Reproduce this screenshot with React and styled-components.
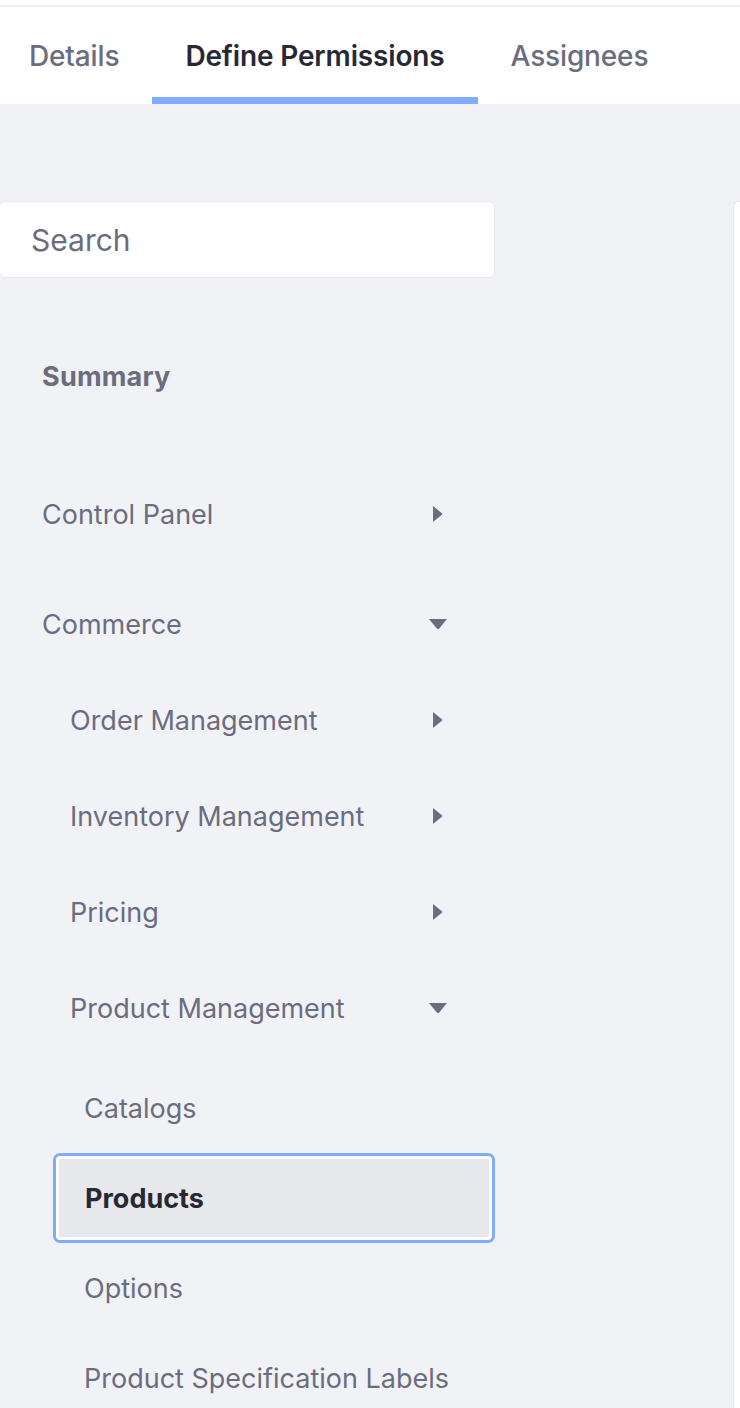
import styled, { createGlobalStyle } from 'styled-components';

const GlobalStyle = createGlobalStyle`
  html, body {
    margin: 0;
    padding: 0;
    background-color: #f1f2f5;
    font-family: Inter, "Noto Sans", sans-serif;
    color: #6b6c7e;
  }
`;

const TopEdge = styled.div`
  height: 5px;
  background-color: #fff;
  border-bottom: 2px solid #eceef2;
`;

const TabBar = styled.nav`
  display: flex;
  height: 97px;
  background-color: #fff;
  margin-left: -4px;
  overflow: hidden;
`;

const Tab = styled.div`
  display: flex;
  align-items: center;
  padding: 1px 33px 0;
  font-size: 28px;
  letter-spacing: -0.15px;
  font-weight: ${({ $active }) => ($active ? 600 : 500)};
  color: ${({ $active }) => ($active ? '#272833' : '#6b6c7e')};
  box-shadow: ${({ $active }) => ($active ? 'inset 0 -7px 0 #80acff' : 'none')};
  white-space: nowrap;
`;

const Body = styled.div`
  display: grid;
  grid-template-columns: 495px 1fr;
  column-gap: 238px;
  padding-top: 97px;
`;

const Sidebar = styled.aside`
  display: flex;
  flex-direction: column;
`;

const Search = styled.input`
  box-sizing: border-box;
  height: 77px;
  width: 496px;
  margin-left: -1px;
  border: 1px solid #e7e7ed;
  border-radius: 6px;
  background-color: #fff;
  padding: 0 0 0 31px;
  font-family: inherit;
  font-size: 30px;
  color: #272833;
  outline: none;

  &::placeholder {
    color: #6b6c7e;
  }
`;

const Panel = styled.section`
  background-color: #fff;
  border: 1px solid #e7e7ed;
  border-right: none;
  border-radius: 6px 0 0 0;
`;

const Summary = styled.div`
  display: flex;
  align-items: center;
  height: 96px;
  margin-top: 50px;
  margin-bottom: 42px;
  padding-left: 42px;
  font-size: 27px;
  font-weight: 700;
  letter-spacing: 0.2px;
`;

const List = styled.ul`
  list-style: none;
  margin: 0;
  padding: 0;
  display: flex;
  flex-direction: column;
  gap: ${({ $gap }) => $gap || 0}px;
  padding-top: ${({ $top }) => $top || 0}px;
`;

const Row = styled.li`
  display: flex;
  align-items: center;
  justify-content: space-between;
  box-sizing: border-box;
  height: ${({ $h }) => $h}px;
  padding-left: ${({ $indent }) => $indent}px;
  padding-right: 48px;
  font-size: 27px;
  white-space: nowrap;
`;

const ActiveRow = styled.li`
  display: flex;
  align-items: center;
  box-sizing: border-box;
  height: 90px;
  margin-left: 53px;
  padding-left: 29px;
  border: 3px solid #80acff;
  border-radius: 7px;
  background-color: #e7e8ec;
  box-shadow: inset 0 0 0 3px #fff;
  font-size: 27px;
  font-weight: 700;
  color: #272833;
`;

const Caret = ({ open }) => (
  <svg width="18" height="18" viewBox="0 0 18 18" aria-hidden="true">
    {open ? (
      <path d="M0 4 L18 4 L10.2 13.4 Q9 14.6 7.8 13.4 Z" fill="#6b6c7e" />
    ) : (
      <path d="M4 1 L4 17 L12.6 10.1 Q14 9 12.6 7.9 Z" fill="#6b6c7e" />
    )}
  </svg>
);

const Item = ({ label, indent, h = 96, caret }) => (
  <Row $indent={indent} $h={h}>
    <span>{label}</span>
    {caret && <Caret open={caret === 'open'} />}
  </Row>
);

export default function App() {
  return (
    <>
      <GlobalStyle />
      <TopEdge />
      <TabBar>
        <Tab>Details</Tab>
        <Tab $active>Define Permissions</Tab>
        <Tab>Assignees</Tab>
      </TabBar>

      <Body>
        <Sidebar>
          <Search placeholder="Search" />
          <Summary>Summary</Summary>

          <List $gap={14}>
            <Item label="Control Panel" indent={42} caret="closed" />
            <li>
              <List>
                <Item label="Commerce" indent={42} caret="open" />
                <Item label="Order Management" indent={70} caret="closed" />
                <Item label="Inventory Management" indent={70} caret="closed" />
                <Item label="Pricing" indent={70} caret="closed" />
                <Item label="Product Management" indent={70} caret="open" />
                <li>
                  <List $top={7}>
                    <Item label="Catalogs" indent={84} h={90} />
                    <ActiveRow>Products</ActiveRow>
                    <Item label="Options" indent={84} h={90} />
                    <Item label="Product Specification Labels" indent={84} h={90} />
                  </List>
                </li>
              </List>
            </li>
          </List>
        </Sidebar>

        <Panel />
      </Body>
    </>
  );
}
